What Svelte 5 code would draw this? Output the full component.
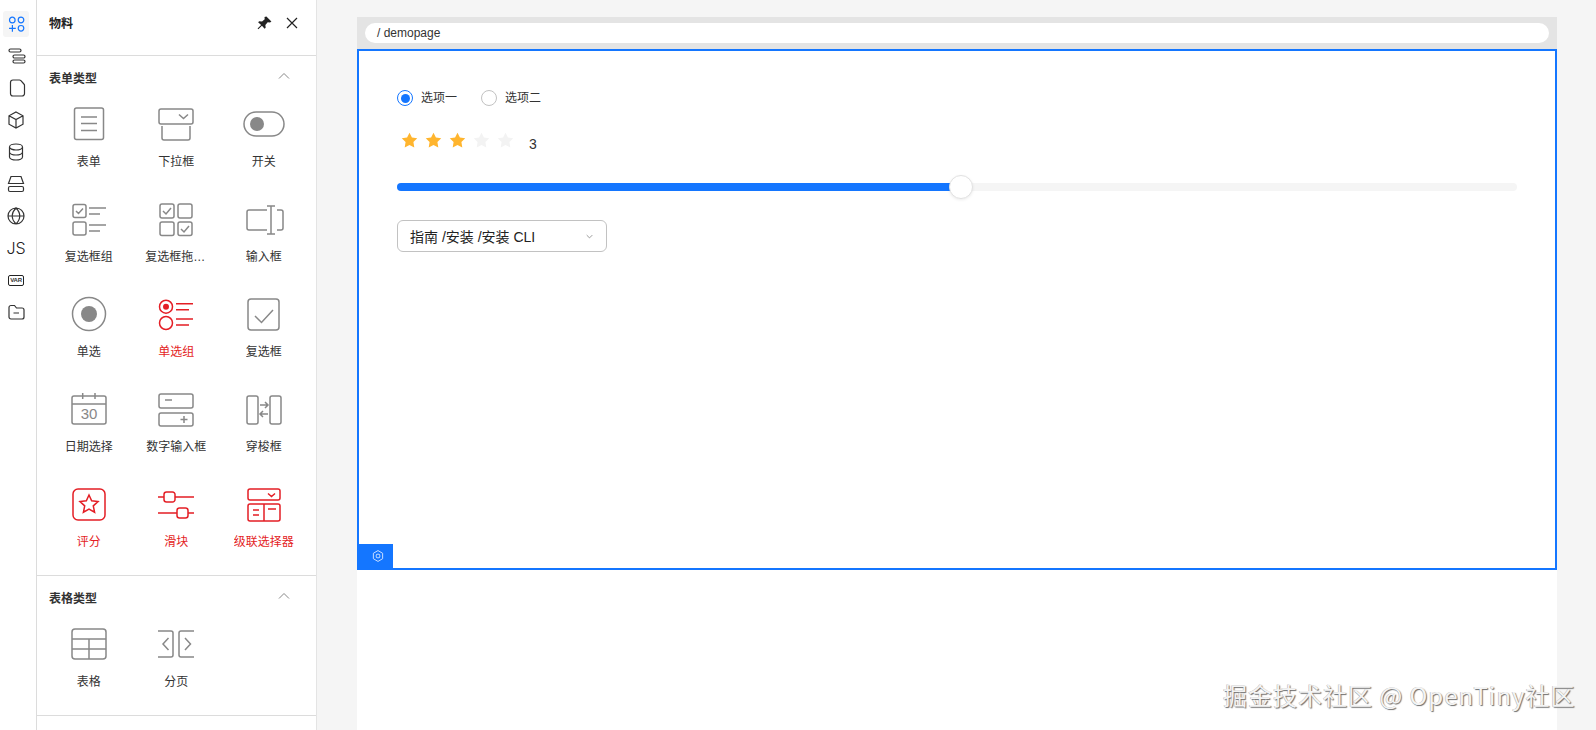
<script lang="ts">
  // rounded rectangle as a path string
  function rr(x: number, y: number, w: number, h: number, r = 2) {
    return `M${x + r} ${y}h${w - 2 * r}a${r} ${r} 0 0 1 ${r} ${r}v${h - 2 * r}a${r} ${r} 0 0 1 -${r} ${r}h-${w - 2 * r}a${r} ${r} 0 0 1 -${r} -${r}v-${h - 2 * r}a${r} ${r} 0 0 1 ${r} -${r}z`;
  }
  function circle(cx: number, cy: number, r: number) {
    return `M${cx - r} ${cy}a${r} ${r} 0 1 0 ${2 * r} 0a${r} ${r} 0 1 0 -${2 * r} 0z`;
  }
  function star(cx: number, cy: number, R: number, r: number) {
    let d = '';
    for (let i = 0; i < 10; i++) {
      const a = (Math.PI / 5) * i - Math.PI / 2;
      const q = i % 2 ? r : R;
      d += `${i ? 'L' : 'M'}${(cx + q * Math.cos(a)).toFixed(2)} ${(cy + q * Math.sin(a)).toFixed(2)}`;
    }
    return d + 'z';
  }

  const formItems = [
    { name: '表单', d: rr(7.5, 6, 29, 31.5) + 'M14 15h16M14 21.5h16M14 28.5h16' },
    { name: '下拉框', d: rr(5, 7, 34, 15) + 'M8 24v12a2 2 0 0 0 2 2h24a2 2 0 0 0 2 -2v-12M25 12.5l4.500 4l4.500 -4' },
    { name: '开关', d: rr(2, 10, 40, 24, 12), fill: circle(15, 22, 7) },
    {
      name: '复选框组',
      d: rr(6, 7.500, 13, 13) + rr(6, 25, 13, 13) + 'M22 11h17M22 17h11M22 28h17M22 34h11M9 14l2.500 2.500l4.500 -5',
    },
    {
      name: '复选框拖拽组',
      d: rr(6, 7, 14, 14) + rr(24, 7, 14, 14) + rr(6, 25, 14, 13.500) + rr(24, 25, 14, 13.500) + 'M9 14l3 3l5 -6M27 32l3 3l5 -6',
    },
    { name: '输入框', d: 'M25 13h-18a2 2 0 0 0 -2 2v16a2 2 0 0 0 2 2h18M35 13h4a2 2 0 0 1 2 2v16a2 2 0 0 1 -2 2h-4M29 9v28M25 9h8M25 37h8' },
    { name: '单选', d: circle(22, 22, 16.5), fill: circle(22, 22, 8) },
    {
      name: '单选组',
      red: true,
      d: circle(12, 14.700, 6.500) + circle(12, 31, 6.500) + 'M22 11.700h17M22 17.700h13M22 27h17M22 33h13',
      fill: circle(12, 14.700, 3),
    },
    { name: '复选框', d: rr(6, 7, 31, 31, 3) + 'M13 24l6.500 6.500l11.500 -12.500' },
    { name: '日期选择', d: rr(5, 9, 34, 28) + 'M5 17h34M15.700 6v6M28 6v6', label: '30' },
    {
      name: '数字输入框',
      d: rr(5, 7, 34, 14) + rr(5, 26, 34, 13) + 'M11 13h7M26.500 32.500h7M30 29v7',
    },
    {
      name: '穿梭框',
      d: rr(5, 9, 11, 28) + rr(28, 9, 11, 28) + 'M18 18h8M23 15l3 3l-3 3M26 27h-8M21 24l-3 3l3 3',
    },
    { name: '评分', red: true, d: rr(6, 7, 32, 31, 5) + star(22, 22.500, 9.500, 4.500) },
    {
      name: '滑块',
      red: true,
      d: 'M4 15h6M21 15h19M4 31h19M34 31h6' + rr(10, 10, 11, 10, 2.500) + rr(23, 26, 11, 10, 2.500),
    },
    {
      name: '级联选择器',
      red: true,
      d: rr(6, 7, 32, 11, 2) + rr(6, 22, 32, 17, 2) + 'M22 22v17M26 11.500l3.500 3l3.500 -3M11 28h6M11 33h6M26 27h8',
    },
  ];

  const tableItems = [
    { name: '表格', d: rr(5, 7, 34, 30, 3) + 'M5 17h34M5 27h34M22 17v20' },
    {
      name: '分页',
      d: 'M4 9h13a2 2 0 0 1 2 2v22a2 2 0 0 1 -2 2h-13M40 9h-13a2 2 0 0 0 -2 2v22a2 2 0 0 0 2 2h13M14.500 16l-5.500 6l5.500 6M31 16l5.500 6l-5.500 6',
    },
  ];

  const sections = [
    { title: '表单类型', items: formItems },
    { title: '表格类型', items: tableItems },
  ];

  const railIcons = [
    rr(5, 5, 12, 3, 1.500) + rr(9, 11, 12, 3, 1.500) + rr(9, 16, 12, 3, 1.500),
    'M9 4h6.500c.5 0 1 .2 1.400 .6l3 3.400c.4 .4 .6 .9 .6 1.400v8a2.500 2.500 0 0 1 -2.500 2.600h-9a2.500 2.500 0 0 1 -2.500 -2.500v-11a2.500 2.500 0 0 1 2.500 -2.500z',
    'M12 4l7 3.800v8.400l-7 3.800l-7 -3.800v-8.400zM5 7.800l7 3.800l7 -3.800M12 11.600v8.400',
    'M5.500 7c0-1.700 3-3 6.500-3s6.500 1.300 6.500 3s-3 3-6.500 3s-6.500-1.300-6.500-3zM5.500 7v10c0 1.700 3 3 6.500 3s6.500-1.300 6.500-3v-10M5.500 12c0 1.700 3 3 6.500 3s6.500-1.300 6.500-3',
    'M7 4.500h10l2.500 7h-15zM4.500 11.500v0' + rr(4.500, 14.500, 15, 5, 1.500),
    circle(12, 12, 8) + 'M4 12h16M12 4c-5 5-5 11 0 16M12 4c5 5 5 11 0 16',
  ];
</script>

<div class="app">
  <nav class="rail">
    <div class="rail-btn active">
      <svg viewBox="0 0 24 24" class="rail-icon">
        <path d={circle(8.300, 8, 2.800) + circle(17, 8, 2.800) + circle(17, 16.300, 2.800) + 'M5 16.300h6.800M8.400 13v6.800'} />
      </svg>
    </div>
    {#each railIcons as d}
      <div class="rail-btn">
        <svg viewBox="0 0 24 24" class="rail-icon"><path {d} /></svg>
      </div>
    {/each}
    <div class="rail-btn js">JS</div>
    <div class="rail-btn"><span class="var-tag">VAR</span></div>
    <div class="rail-btn">
      <svg viewBox="0 0 24 24" class="rail-icon">
        <path d="M5 7.500a2 2 0 0 1 2 -2h3.500l2 2.500h5.500a2 2 0 0 1 2 2v7a2 2 0 0 1 -2 2h-11a2 2 0 0 1 -2 -2zM9.500 13h5.500" />
      </svg>
    </div>
  </nav>

  <aside class="panel">
    <header class="panel-head">
      <span class="panel-title">物料</span>
      <div class="panel-actions">
        <svg viewBox="0 0 16 16" class="pin">
          <path d="M9.800 1.500l4.700 4.700l-1.300 .8l-2.200 -.2l-2.200 2.500l.3 2.700l-1 1l-2.500 -2.800l-3.400 3.300l-.7 -.7l3.300 -3.400l-2.800 -2.500l1 -1l2.700 .3l2.500 -2.200l-.2 -2.200z" />
        </svg>
        <svg viewBox="0 0 16 16" class="close"><path d="M3 3l10 10M13 3l-10 10" /></svg>
      </div>
    </header>

    {#each sections as section}
      <section class="section">
        <div class="section-head">
          <span class="section-title">{section.title}</span>
          <svg viewBox="0 0 12 8" class="chevron"><path d="M1 6.500l5 -5l5 5" /></svg>
        </div>
        <div class="grid">
          {#each section.items as item}
            <div class="item" class:red={item.red}>
              <svg viewBox="0 0 44 44" class="item-icon">
                <path d={item.d} />
                {#if item.fill}
                  <path class="dot" d={item.fill} />
                {/if}
                {#if item.label}
                  <text x="22" y="32" text-anchor="middle" class="icon-text">{item.label}</text>
                {/if}
              </svg>
              <span class="item-name">{item.name}</span>
            </div>
          {/each}
        </div>
      </section>
    {/each}
  </aside>

  <main class="canvas">
    <div class="page">
      <div class="address">
        <div class="pill">/ demopage</div>
      </div>
      <div class="frame">
        <div class="radios">
          <label class="radio"><span class="ring on"></span>选项一</label>
          <label class="radio"><span class="ring"></span>选项二</label>
        </div>

        <div class="rate">
          {#each [1, 2, 3, 4, 5] as n}
            <svg viewBox="0 0 24 24" class="star" class:lit={n <= 3}>
              <path d={star(12, 12.500, 11.500, 5.800)} />
            </svg>
          {/each}
          <span class="rate-value">3</span>
        </div>

        <div class="slider">
          <div class="slider-fill"></div>
          <div class="slider-thumb"></div>
        </div>

        <div class="select">
          <span>指南 /安装 /安装 CLI</span>
          <svg viewBox="0 0 10 6" class="select-arrow"><path d="M1 1l4 4l4 -4" /></svg>
        </div>

        <div class="frame-tab">
          <svg viewBox="0 0 16 16" class="gear">
            <path d="M8 1.800l5.300 3.100v6.200l-5.300 3.100l-5.300 -3.100v-6.200z" />
            <rect x="6" y="6" width="4" height="4" rx="1" />
          </svg>
        </div>
      </div>
    </div>
  </main>

  <div class="watermark">掘金技术社区 @ OpenTiny社区</div>
</div>

<style>
  :global(body) {
    margin: 0;
    background: #fff;
  }

  .app {
    display: flex;
    position: relative;
    height: 730px;
    overflow: hidden;
    font-family: 'Liberation Sans', 'Noto Sans CJK SC', sans-serif;
    color: #333;
  }

  /* left icon rail */
  .rail {
    flex-shrink: 0;
    border-right: 1px solid #dcdcdc;
    display: flex;
    flex-direction: column;
    align-items: center;
    padding-top: 11px;
    padding-right: 4px;
    box-sizing: content-box;
    width: 32px;
    gap: 6px;
  }

  .rail-btn {
    width: 26px;
    height: 26px;
    display: flex;
    align-items: center;
    justify-content: center;
    border-radius: 3px;
    color: #333;
  }

  .rail-btn.active {
    background: #f5f5f5;
    color: #1476ff;
  }

  .rail-icon {
    width: 24px;
    height: 24px;
    fill: none;
    stroke: currentColor;
    stroke-width: 1.200;
  }

  .js {
    font-family: Inter, 'Liberation Sans', sans-serif;
    font-size: 16px;
    font-weight: 300;
    color: #222;
  }

  .var-tag {
    border: 1px solid #222;
    border-radius: 2px;
    font-size: 6px;
    font-weight: 700;
    line-height: 9px;
    width: 14px;
    text-align: center;
    letter-spacing: -0.2px;
  }

  /* material panel */
  .panel {
    width: 279px;
    flex-shrink: 0;
    border-right: 1px solid #e4e4e4;
    background: #fff;
  }

  .panel-head {
    height: 55px;
    border-bottom: 1px solid #dcdcdc;
    box-sizing: content-box;
    display: flex;
    align-items: flex-start;
    justify-content: space-between;
    padding: 0 16px 0 12px;
  }

  .panel-title {
    font-size: 12px;
    font-weight: 700;
    line-height: 18px;
    margin-top: 15px;
    color: #222;
  }

  .panel-actions {
    display: flex;
    gap: 11px;
    margin-top: 15px;
  }

  .pin {
    width: 17px;
    height: 17px;
    fill: #222;
  }

  .close {
    width: 16px;
    height: 16px;
    fill: none;
    stroke: #222;
    stroke-width: 1.200;
  }

  .section {
    border-bottom: 1px solid #dcdcdc;
  }

  .section-head {
    height: 44px;
    padding: 0 26px 2px 12px;
    box-sizing: border-box;
    display: flex;
    align-items: center;
    justify-content: space-between;
  }

  .section-title {
    font-size: 12px;
    font-weight: 700;
    color: #333;
  }

  .chevron {
    width: 12px;
    height: 8px;
    margin-top: -3px;
    fill: none;
    stroke: #888;
    stroke-width: 1;
  }

  .grid {
    display: grid;
    grid-template-columns: repeat(3, 87.5px);
    grid-auto-rows: 95px;
    padding-left: 8px;
  }

  .item {
    display: flex;
    flex-direction: column;
    align-items: center;
    padding-top: 2px;
    color: #333;
  }

  .item-icon {
    width: 44px;
    height: 44px;
    fill: none;
    stroke: #888;
    stroke-width: 1.500;
  }

  .item-icon .dot {
    fill: #888;
    stroke: none;
  }

  .icon-text {
    fill: #888;
    stroke: none;
    font-family: 'Liberation Sans', sans-serif;
    font-size: 15px;
  }

  .item.red {
    color: #e41e25;
  }

  .item.red .item-icon {
    stroke: #e41e25;
  }

  .item.red .item-icon .dot {
    fill: #e41e25;
  }

  .item-name {
    margin-top: 7px;
    max-width: 62px;
    font-size: 12px;
    line-height: 18px;
    white-space: nowrap;
    overflow: hidden;
    text-overflow: ellipsis;
  }

  /* canvas area */
  .canvas {
    flex: 1;
    min-width: 0;
    background: #f5f5f5;
    padding: 17px 39px 0 40px;
  }

  .page {
    background: #fff;
    height: 713px;
  }

  .address {
    height: 32px;
    box-sizing: border-box;
    background: #e4e4e4;
    padding: 6px 8px;
  }

  .pill {
    height: 20px;
    background: #fff;
    border-radius: 10px;
    padding-left: 12px;
    font-size: 12px;
    line-height: 21px;
    color: #333;
  }

  .frame {
    position: relative;
    height: 521px;
    box-sizing: border-box;
    border: 2px solid #1476ff;
    padding: 39px 38px 0;
  }

  .radios {
    display: flex;
    gap: 24px;
    height: 16px;
  }

  .radio {
    display: flex;
    align-items: center;
    gap: 8px;
    font-size: 12px;
    line-height: 14px;
    color: #333;
  }

  .ring {
    width: 16px;
    height: 16px;
    box-sizing: border-box;
    border: 1px solid #c2c2c2;
    border-radius: 50%;
    display: flex;
    align-items: center;
    justify-content: center;
  }

  .ring.on {
    border-color: #1476ff;
  }

  .ring.on::after {
    content: '';
    width: 9px;
    height: 9px;
    border-radius: 50%;
    background: #1476ff;
  }

  .rate {
    display: flex;
    align-items: center;
    gap: 7px;
    margin-top: 26px;
    height: 16px;
    padding-left: 4px;
  }

  .star {
    width: 17px;
    height: 17px;
    fill: #f3f3f3;
  }

  .star.lit {
    fill: #ffb52e;
  }

  .rate-value {
    margin-left: 8px;
    font-size: 14px;
    margin-top: 7px;
  }

  .slider {
    position: relative;
    margin-top: 35px;
    height: 8px;
    border-radius: 4px;
    background: #f5f5f5;
  }

  .slider-fill {
    height: 100%;
    width: 564px;
    border-radius: 4px;
    background: #1476ff;
  }

  .slider-thumb {
    position: absolute;
    left: 552px;
    top: -8px;
    width: 24px;
    height: 24px;
    box-sizing: border-box;
    border-radius: 50%;
    background: #fff;
    border: 1px solid #e2e2e2;
    box-shadow: 0 1px 3px rgba(0, 0, 0, 0.08);
  }

  .select {
    display: flex;
    align-items: center;
    justify-content: space-between;
    margin-top: 29px;
    width: 210px;
    height: 32px;
    box-sizing: border-box;
    border: 1px solid #c2c2c2;
    border-radius: 6px;
    padding: 0 13px 0 12px;
    font-size: 14px;
    color: #222;
  }

  .select-arrow {
    width: 7px;
    height: 5px;
    fill: none;
    stroke: #888;
    stroke-width: 1.200;
  }

  .frame-tab {
    position: absolute;
    left: -2px;
    bottom: 0;
    width: 36px;
    height: 24px;
    box-sizing: border-box;
    padding-left: 6px;
    background: #1476ff;
    display: flex;
    align-items: center;
    justify-content: center;
  }

  .gear {
    width: 14px;
    height: 14px;
    fill: none;
    stroke: #cfe2ff;
    stroke-width: 1.100;
    stroke-linejoin: round;
  }

  .watermark {
    position: absolute;
    left: 1223px;
    top: 679px;
    font-family: 'Noto Sans CJK SC', sans-serif;
    font-size: 24px;
    line-height: 32px;
    letter-spacing: 1px;
    white-space: nowrap;
    color: #f4f4f4;
    text-shadow: 1px 1px 1px #6e6e6e, -0.5px -0.5px 0 #b5b5b5;
  }
</style>
